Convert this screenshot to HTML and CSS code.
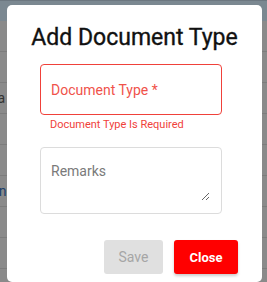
FILE: index.html
```html
<!DOCTYPE html>
<html lang="en">
<head>
    <meta charset="UTF-8">
    <meta name="viewport" content="width=device-width, initial-scale=1.0">
    <title>Add Document Type</title>
    <link rel="stylesheet" href="styles.css">
</head>
<body>
    <!-- Page behind the dialog -->
    <div class="backdrop">
        <div class="topbar"></div>
        <div class="row"></div>
        <div class="row"></div>
        <div class="row"><span class="cell-text">Visa</span></div>
        <div class="row"></div>
        <div class="row"></div>
        <div class="row"><span class="cell-text link">Admin</span></div>
        <div class="row"></div>
        <div class="row"></div>
    </div>

    <div class="modal">
        <h2 class="modal-title">Add Document Type</h2>
        <form class="modal-form">
            <div class="form-group">
                <input type="text" class="field field-error" placeholder="Document Type *">
                <div class="helper-text">Document Type Is Required</div>
            </div>
            <div class="form-group">
                <div class="area-box">
                    <textarea class="field-area" placeholder="Remarks"></textarea>
                </div>
            </div>
            <div class="actions">
                <button type="button" class="btn btn-save" disabled>Save</button>
                <button type="button" class="btn btn-close">Close</button>
            </div>
        </form>
    </div>
</body>
</html>
```

FILE: styles.css
```css
body {
    margin: 0;
    font-family: Roboto, "Liberation Sans", Arial, sans-serif;
    background-color: #8a8a8a;
    overflow: hidden;
    height: 282px;
    position: relative;
}

.backdrop {
    display: flex;
    flex-direction: column;
}

.topbar {
    height: 20px;
    background-color: #7b8891;
    border-top: 1px solid #6c7780;
}

.row {
    height: 30px;
    border-bottom: 1px solid #7c7c7c;
    display: flex;
    align-items: center;
    font-size: 14px;
}

.cell-text {
    margin-left: -22px;
    color: #333;
}

.cell-text.link {
    color: #1c3f6a;
    margin-left: -34px;
}

.modal {
    position: absolute;
    left: 7px;
    top: 5px;
    width: 255px;
    height: 277px;
    background: white;
    border-radius: 5px;
    box-sizing: border-box;
    padding-top: 19px;
}

.modal-title {
    margin: 0;
    text-align: center;
    font-size: 23px;
    line-height: 28px;
    font-weight: 400;
    color: #111;
    -webkit-text-stroke: 0.35px #111;
}

.modal-form {
    margin: 12px 0 0 33px;
    width: 182px;
}

.form-group {
    margin-bottom: 15px;
}

.field {
    display: block;
    width: 100%;
    box-sizing: border-box;
    border: 1px solid #dcdcdc;
    border-radius: 4px;
    padding: 0 10px;
    font-family: inherit;
    font-size: 14px;
    color: #333;
    outline: none;
}

.field-error {
    height: 51px;
    border-color: #f0413a;
}

.field-error::placeholder {
    color: #f0524a;
}

.helper-text {
    margin: 3px 0 0 10px;
    font-size: 11px;
    line-height: 14px;
    color: #f0413a;
}

.area-box {
    height: 67px;
    box-sizing: border-box;
    border: 1px solid #dcdcdc;
    border-radius: 4px;
    padding: 15px 11px 12px 10px;
}

.field-area {
    display: block;
    width: 100%;
    height: 100%;
    box-sizing: border-box;
    border: none;
    padding: 0;
    font-family: inherit;
    font-size: 14px;
    line-height: 17px;
    color: #333;
    outline: none;
    resize: vertical;
}

.field-area::placeholder {
    color: #7a7a7a;
}

.actions {
    display: flex;
    justify-content: flex-end;
    gap: 11px;
    margin-top: 26px;
    margin-right: -16px;
}

.btn {
    height: 34px;
    border: none;
    border-radius: 3px;
    font-family: inherit;
    font-size: 14px;
    cursor: pointer;
}

.btn-save {
    width: 59px;
    background-color: #e0e0e0;
    color: #a6a6a6;
}

.btn-close {
    width: 64px;
    background-color: #ff0000;
    color: white;
    font-size: 13px;
    font-weight: bold;
    box-shadow: 0 2px 3px rgba(0,0,0,0.2);
}
```
